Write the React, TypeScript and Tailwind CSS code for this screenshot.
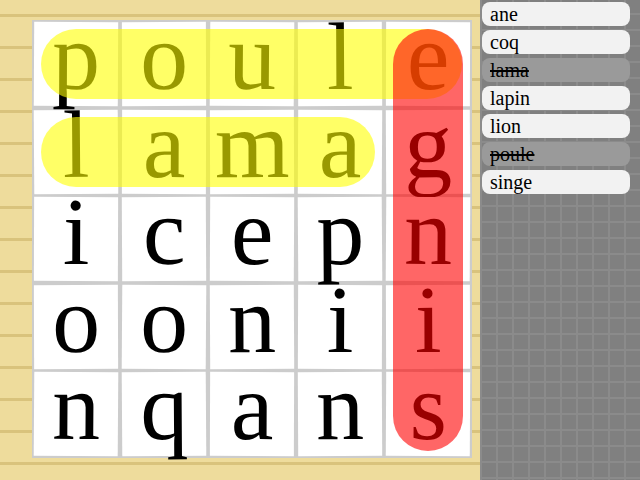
const rows = ["poule", "lamag", "icepn", "oonii", "nqans"];

// slight hand-placed tilt so the tiles don't look perfectly machined
const tilts = [
  "rotate-[0.3deg]", "-rotate-[0.2deg]", "rotate-[0.4deg]", "-rotate-[0.3deg]", "rotate-[0.2deg]",
  "-rotate-[0.4deg]", "rotate-[0.2deg]", "-rotate-[0.2deg]", "rotate-[0.3deg]", "-rotate-[0.3deg]",
  "rotate-[0.2deg]", "-rotate-[0.3deg]", "rotate-[0.3deg]", "-rotate-[0.4deg]", "rotate-[0.4deg]",
  "-rotate-[0.2deg]", "rotate-[0.4deg]", "-rotate-[0.3deg]", "rotate-[0.2deg]", "-rotate-[0.2deg]",
  "rotate-[0.4deg]", "-rotate-[0.4deg]", "rotate-[0.2deg]", "-rotate-[0.3deg]", "rotate-[0.3deg]",
];

const words = [
  { label: "ane", found: false },
  { label: "coq", found: false },
  { label: "lama", found: true },
  { label: "lapin", found: false },
  { label: "lion", found: false },
  { label: "poule", found: true },
  { label: "singe", found: false },
];

const App = () => {
  return (
    <div className="flex w-[640px] h-[480px] overflow-hidden font-['Liberation_Serif',serif]">
      {/* Paper */}
      <div className="w-[480px] h-full pl-[32px] pt-[20px] bg-[#eedc9c] bg-[repeating-linear-gradient(to_bottom,transparent_0px,transparent_14px,#d9c37c_14px,#d9c37c_17px,transparent_17px,transparent_32px)]">
        {/* Board */}
        <div className="relative w-[440px] p-[2px] bg-[#cccccc] grid grid-cols-5 gap-x-[3.5px] gap-y-[3.5px]">
          {rows.flatMap((row, r) =>
            row.split("").map((ch, c) => (
              <div
                key={`${r}-${c}`}
                className={`h-[84px] bg-white text-center text-[96px] leading-[70px] text-black ${tilts[r * 5 + c]}`}
              >
                {ch}
              </div>
            ))
          )}

          {/* Highlights */}
          <div className="absolute left-[9px] top-[9px] w-[421px] h-[70px] rounded-full bg-[rgba(255,255,0,0.6)]" />
          <div className="absolute left-[9px] top-[97px] w-[334px] h-[70px] rounded-full bg-[rgba(255,255,0,0.6)]" />
          <div className="absolute left-[361px] top-[9px] w-[70px] h-[422px] rounded-full bg-[rgba(255,0,0,0.6)]" />
        </div>
      </div>

      {/* Word list */}
      <div className="w-[160px] h-full bg-[#808080] bg-[linear-gradient(to_bottom,#8b8b8b_2px,transparent_2px),linear-gradient(to_right,#8b8b8b_2px,transparent_2px)] bg-[size:16px_16px] bg-[position:0px_-3px]">
        <div className="flex flex-col gap-[4px] pt-[2px] pl-[2px] pr-[10px]">
          {words.map((w) => (
            <div
              key={w.label}
              className={`h-[24px] rounded-[8px] pl-[8px] text-[20px] leading-[24px] text-black ${
                w.found ? "bg-[#9a9a9a] line-through" : "bg-[#f2f2f2]"
              }`}
            >
              {w.label}
            </div>
          ))}
        </div>
      </div>
    </div>
  );
};

export default App;
